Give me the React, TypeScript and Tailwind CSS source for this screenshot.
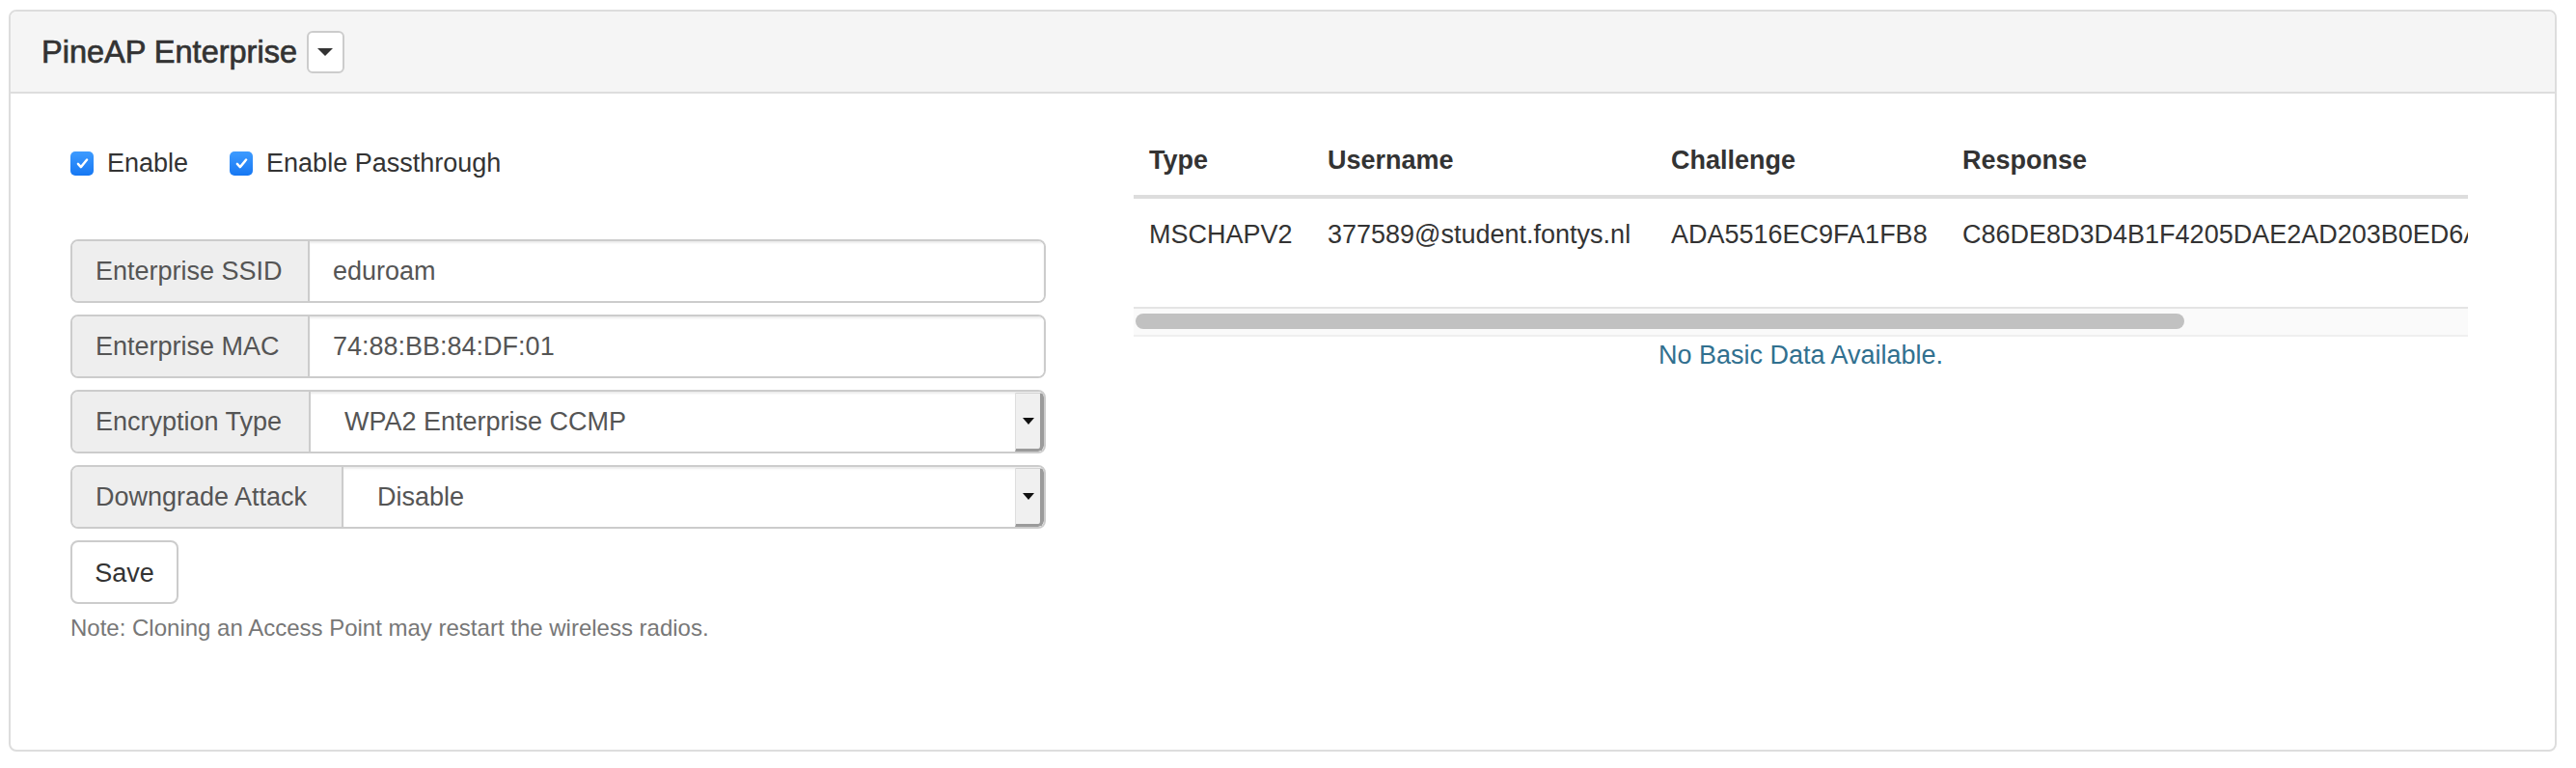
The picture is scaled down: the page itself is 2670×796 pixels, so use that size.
import { useState } from "react";

/**
 * PineAP Enterprise panel: settings form on the left, captured
 * challenge/response table on the right. Bootstrap-ish look, scaled up.
 */

type Capture = {
  type: string;
  username: string;
  challenge: string;
  response: string;
};

const captures: Capture[] = [
  {
    type: "MSCHAPV2",
    username: "377589@student.fontys.nl",
    challenge: "ADA5516EC9FA1FB8",
    response: "C86DE8D3D4B1F4205DAE2AD203B0ED6A1F39C0E7B52D4A8E",
  },
];

function Checkbox({
  label,
  checked,
  onChange,
}: {
  label: string;
  checked: boolean;
  onChange: (v: boolean) => void;
}) {
  return (
    <label className="flex cursor-pointer items-center gap-[14px] leading-[39px]">
      <input
        type="checkbox"
        className="sr-only"
        checked={checked}
        onChange={(e) => onChange(e.target.checked)}
      />
      <span
        className={`flex h-[25px] w-[24px] items-center justify-center rounded-[5px] ${
          checked
            ? "bg-linear-to-b from-[#3d9bff] to-[#1577f3]"
            : "border-2 border-[#b5b5b5] bg-white"
        }`}
      >
        {checked ? (
          <svg viewBox="0 0 24 24" className="h-[17px] w-[17px]">
            <path
              d="M5.5 12.5l4.2 4.6L18.5 6.5"
              fill="none"
              stroke="white"
              strokeWidth="3.4"
              strokeLinecap="round"
              strokeLinejoin="round"
            />
          </svg>
        ) : null}
      </span>
      <span>{label}</span>
    </label>
  );
}

function Addon({ label, width }: { label: string; width: string }) {
  return (
    <span
      className={`flex shrink-0 items-center border-r-2 border-[#ccc] bg-[#eee] pl-[24px] text-[#555] ${width}`}
    >
      {label}
    </span>
  );
}

function TextField({ label, value }: { label: string; value: string }) {
  return (
    <div className="flex h-[66px] overflow-hidden rounded-[8px] border-2 border-[#ccc]">
      <Addon label={label} width="w-[246px]" />
      <input
        defaultValue={value}
        className="min-w-0 flex-1 bg-white pl-[24px] text-[#555] shadow-[inset_0_2px_2px_rgba(0,0,0,0.075)] outline-none"
      />
    </div>
  );
}

function SelectField({
  label,
  width,
  options,
}: {
  label: string;
  width: string;
  options: string[];
}) {
  return (
    <div className="flex h-[66px] overflow-hidden rounded-[8px] border-2 border-[#ccc]">
      <Addon label={label} width={width} />
      <div className="flex flex-1 bg-white shadow-[inset_0_2px_2px_rgba(0,0,0,0.075)]">
        <select className="min-w-0 flex-1 appearance-none bg-transparent pl-[35px] text-[#555] outline-none">
          {options.map((o) => (
            <option key={o}>{o}</option>
          ))}
        </select>
        <span className="mt-[1px] flex w-[30px] items-center justify-center rounded-tr-[4px] rounded-br-[6px] border-t border-r-[4px] border-b-[3px] border-l border-t-[#d4d4d4] border-r-[#9b9b9b] border-b-[#9b9b9b] border-l-[#dedede] bg-[#f0f0f0]">
          <span className="h-0 w-0 border-x-[6px] border-t-[7px] border-x-transparent border-t-[#111]" />
        </span>
      </div>
    </div>
  );
}

export default function App() {
  const [enabled, setEnabled] = useState(true);
  const [passthrough, setPassthrough] = useState(true);

  const th = "px-[16px] pt-[17px] pb-[16px] font-bold leading-[39px] border-b-[4px] border-[#ddd]";
  const td = "px-[16px] pt-[18px] pb-[16px] leading-[39px]";

  return (
    <div className="min-h-screen bg-white pl-[9px] pt-[10px] font-['Liberation_Sans',Arial,sans-serif] text-[27px] text-[#333]">
      <div className="flex h-[769px] w-[2641px] flex-col rounded-[8px] border-2 border-[#ddd]">
        {/* Heading */}
        <div className="flex h-[85px] shrink-0 items-center gap-[10px] rounded-t-[6px] border-b-2 border-[#ddd] bg-[#f5f5f5] pl-[32px]">
          <h3 className="text-[32.5px] leading-[34px] text-[#333] [-webkit-text-stroke:0.7px_#333]">
            PineAP Enterprise
          </h3>
          <button
            type="button"
            className="flex h-[44px] w-[39px] items-center justify-center rounded-[6px] border-2 border-[#ccc] bg-white"
          >
            <span className="h-0 w-0 border-x-[8px] border-t-[8px] border-x-transparent border-t-[#333]" />
          </button>
        </div>

        {/* Body */}
        <div className="flex pt-[32px] pl-[62px]">
          {/* Settings */}
          <div className="w-[1011px]">
            <div className="mt-[21px] flex gap-[43px]">
              <Checkbox label="Enable" checked={enabled} onChange={setEnabled} />
              <Checkbox
                label="Enable Passthrough"
                checked={passthrough}
                onChange={setPassthrough}
              />
            </div>

            <div className="mt-[59px] flex flex-col gap-[12px]">
              <TextField label="Enterprise SSID" value="eduroam" />
              <TextField label="Enterprise MAC" value="74:88:BB:84:DF:01" />
              <SelectField
                label="Encryption Type"
                width="w-[247px]"
                options={["WPA2 Enterprise CCMP", "WPA2 Enterprise TKIP", "WPA Enterprise"]}
              />
              <SelectField
                label="Downgrade Attack"
                width="w-[281px]"
                options={["Disable", "Enable"]}
              />
            </div>

            <button
              type="button"
              className="mt-[12px] h-[66px] w-[112px] rounded-[8px] border-2 border-[#ccc] bg-white pt-[2px] text-[#333]"
            >
              Save
            </button>
            <p className="mt-[8px] text-[24px] leading-[34px] text-[#777]">
              Note: Cloning an Access Point may restart the wireless radios.
            </p>
          </div>

          {/* Captures */}
          <div className="mt-[1px] ml-[91px] w-[1383px]">
            <div className="overflow-hidden">
              <table className="mb-[39px] w-max min-w-full border-collapse whitespace-nowrap text-left">
                <thead>
                  <tr>
                    <th className={`${th} w-[185px]`}>Type</th>
                    <th className={`${th} w-[356px]`}>Username</th>
                    <th className={`${th} w-[302px]`}>Challenge</th>
                    <th className={th}>Response</th>
                  </tr>
                </thead>
                <tbody>
                  {captures.map((c) => (
                    <tr key={c.challenge}>
                      <td className={td}>{c.type}</td>
                      <td className={td}>{c.username}</td>
                      <td className={td}>{c.challenge}</td>
                      <td className={td}>{c.response}</td>
                    </tr>
                  ))}
                </tbody>
              </table>
            </div>
            <div className="h-[31px] border-y-2 border-t-[#e4e4e4] border-b-[#efefef] bg-[#fafafa] pt-[5px] pl-[2px]">
              <div className="h-[16px] w-[1087px] rounded-full bg-[#c1c1c1]" />
            </div>
            <p className="text-center leading-[39px] text-[#31708f]">
              No Basic Data Available.
            </p>
          </div>
        </div>
      </div>
    </div>
  );
}
